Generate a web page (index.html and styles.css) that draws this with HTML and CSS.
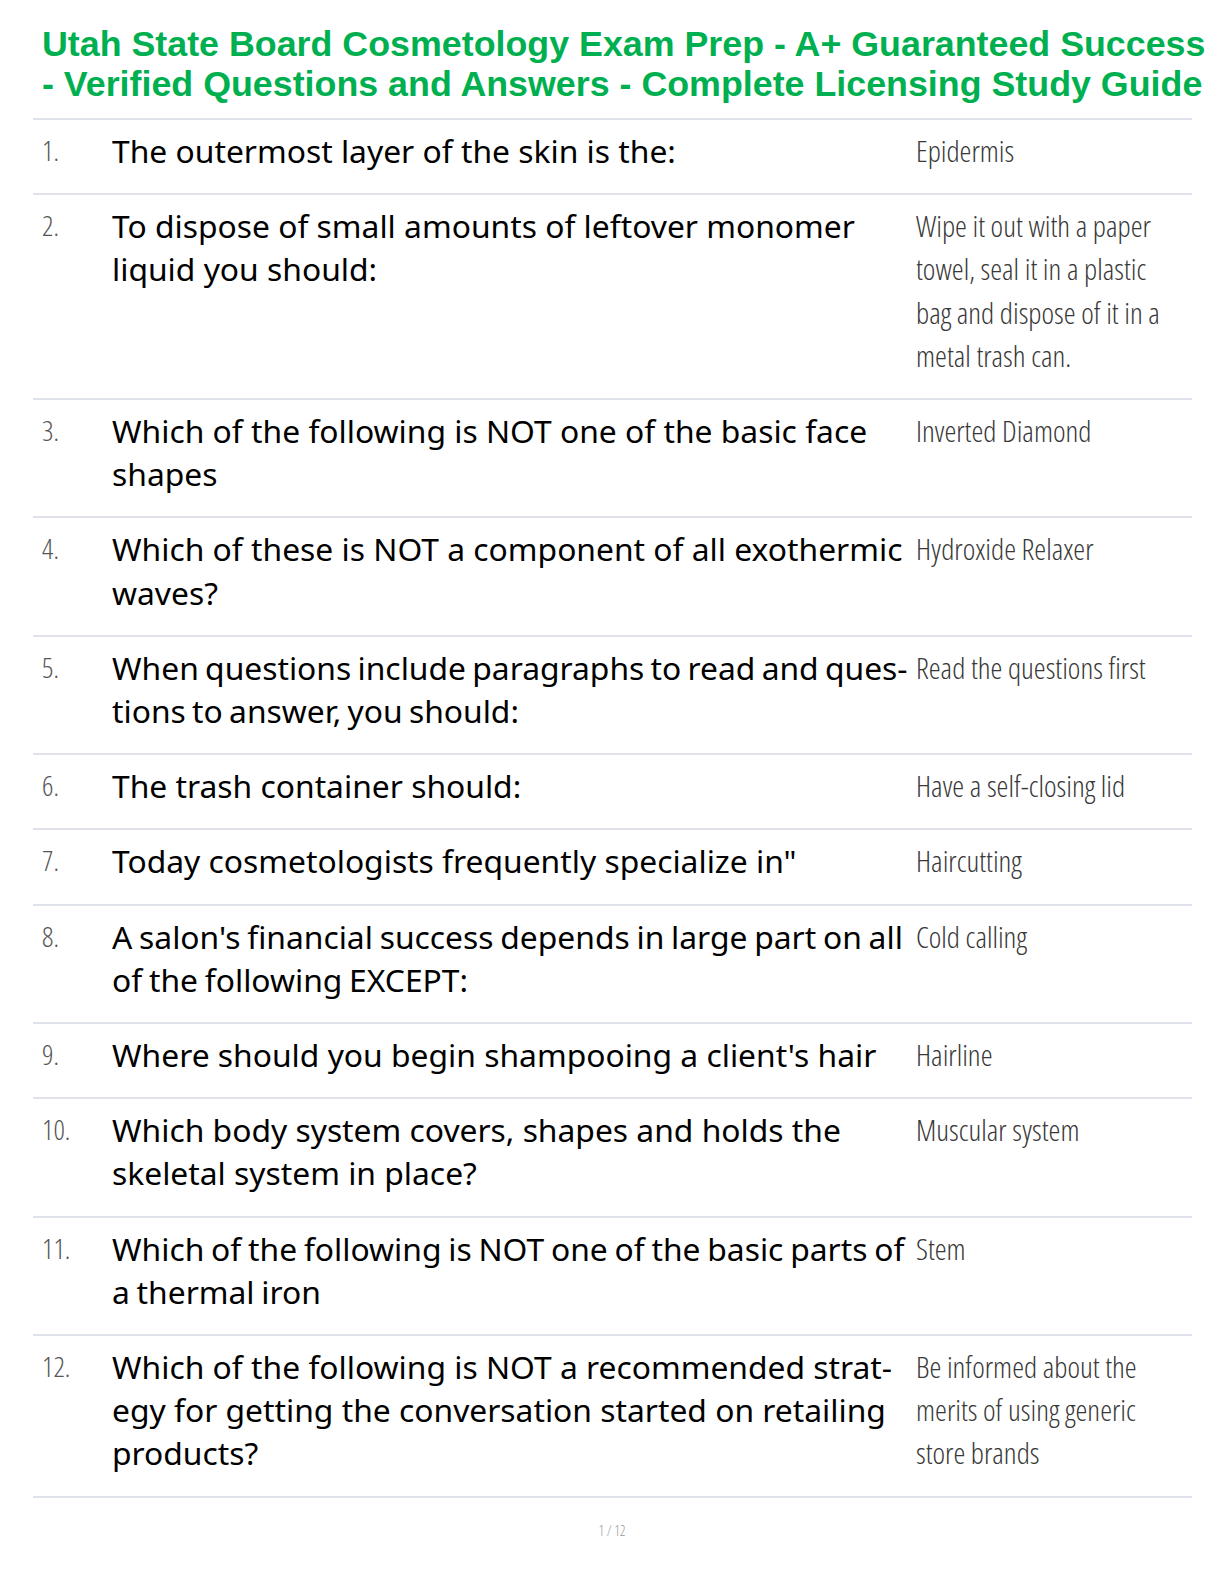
FILE: index.html
```html
<!DOCTYPE html>
<html lang="en">
<head>
<meta charset="utf-8">
<title>Utah State Board Cosmetology Exam Prep</title>
<link rel="stylesheet" href="styles.css">
</head>
<body>
<div class="page">
  <h1 class="title">Utah State Board Cosmetology Exam Prep - A+ Guaranteed Success - Verified Questions and Answers - Complete Licensing Study Guide</h1>
  <div class="list">
    <div class="row"><div class="num">1.</div><div class="q">The outermost layer of the skin is the:</div><div class="a">Epidermis</div></div>
    <div class="row"><div class="num">2.</div><div class="q">To dispose of small amounts of leftover monomer liquid you should:</div><div class="a">Wipe it out with a paper towel, seal it in a plastic bag and dispose of it in a metal trash can.</div></div>
    <div class="row"><div class="num">3.</div><div class="q">Which of the following is NOT one of the basic face shapes</div><div class="a">Inverted Diamond</div></div>
    <div class="row"><div class="num">4.</div><div class="q">Which of these is NOT a component of all exothermic waves?</div><div class="a">Hydroxide Relaxer</div></div>
    <div class="row"><div class="num">5.</div><div class="q tighter">When questions include paragraphs to read and ques&shy;tions to answer, you should:</div><div class="a">Read the questions first</div></div>
    <div class="row"><div class="num">6.</div><div class="q">The trash container should:</div><div class="a">Have a self-closing lid</div></div>
    <div class="row"><div class="num">7.</div><div class="q">Today cosmetologists frequently specialize in"</div><div class="a">Haircutting</div></div>
    <div class="row"><div class="num">8.</div><div class="q tight">A salon's financial success depends in large part on all of the following EXCEPT:</div><div class="a">Cold calling</div></div>
    <div class="row"><div class="num">9.</div><div class="q">Where should you begin shampooing a client's hair</div><div class="a">Hairline</div></div>
    <div class="row"><div class="num">10.</div><div class="q">Which body system covers, shapes and holds the skeletal system in place?</div><div class="a">Muscular system</div></div>
    <div class="row"><div class="num">11.</div><div class="q tight">Which of the following is NOT one of the basic parts of a thermal iron</div><div class="a">Stem</div></div>
    <div class="row"><div class="num">12.</div><div class="q">Which of the following is NOT a recommended strat&shy;egy for getting the conversation started on retailing products?</div><div class="a">Be informed about the merits of using generic store brands</div></div>
  </div>
  <div class="footer">1 / 12</div>
</div>
</body>
</html>
```
FILE: styles.css
```css
html, body {
  margin: 0;
  padding: 0;
  background: #ffffff;
}

.page {
  width: 1224px;
  min-height: 1584px;
  box-sizing: border-box;
  padding-top: 24px;
}

.title {
  width: 1175px;
  margin: 0 0 14px 42px;
  font-family: "Liberation Sans", Arial, sans-serif;
  font-weight: bold;
  font-size: 35.8px;
  line-height: 40px;
  color: #00b050;
}

.list {
  margin-left: 33px;
  width: 1159px;
  border-bottom: 2px solid #dfe2ea;
}

.row {
  display: grid;
  grid-template-columns: 79px 804px 260px;
  border-top: 2px solid #dfe2ea;
  padding: 9px 0 21px;
}

.num {
  padding-left: 9px;
  font-family: "Open Sans", sans-serif;
  font-stretch: condensed;
  font-weight: 300;
  font-size: 28px;
  line-height: 43.2px;
  color: #555555;
}

.q {
  font-family: "Noto Sans", sans-serif;
  font-size: 31.8px;
  line-height: 43.2px;
  color: #000000;
}

.q.tight {
  word-spacing: -1.5px;
}

.q.tighter {
  word-spacing: -2px;
}

.a {
  font-family: "Open Sans", sans-serif;
  font-stretch: condensed;
  font-weight: 300;
  font-size: 30px;
  line-height: 43.2px;
  color: #383838;
}

.footer {
  margin-top: 23px;
  text-align: center;
  font-family: "Open Sans", sans-serif;
  font-stretch: condensed;
  font-weight: 300;
  font-size: 14px;
  line-height: 20px;
  color: #9a9a9a;
}
```
